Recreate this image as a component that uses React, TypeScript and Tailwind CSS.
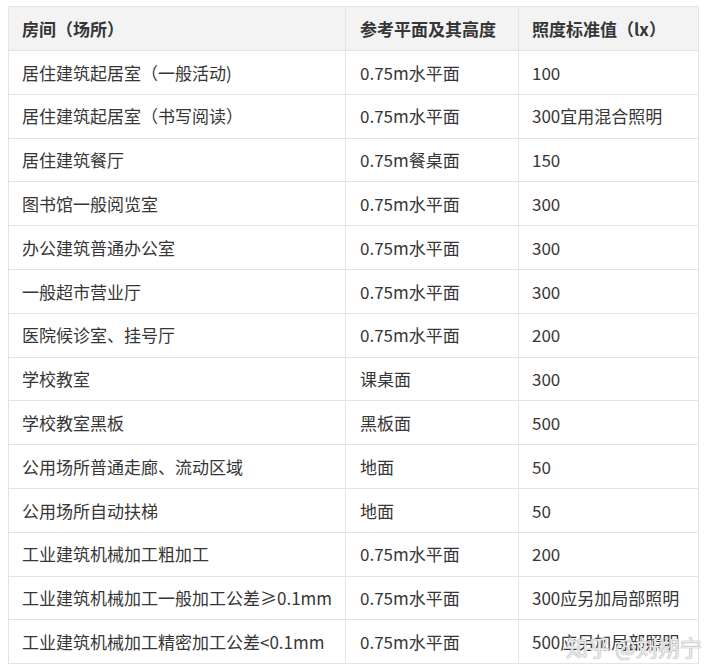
import React from "react";

const rows: [string, string, string][] = [
  ["居住建筑起居室（一般活动)", "0.75m水平面", "100"],
  ["居住建筑起居室（书写阅读）", "0.75m水平面", "300宜用混合照明"],
  ["居住建筑餐厅", "0.75m餐桌面", "150"],
  ["图书馆一般阅览室", "0.75m水平面", "300"],
  ["办公建筑普通办公室", "0.75m水平面", "300"],
  ["一般超市营业厅", "0.75m水平面", "300"],
  ["医院候诊室、挂号厅", "0.75m水平面", "200"],
  ["学校教室", "课桌面", "300"],
  ["学校教室黑板", "黑板面", "500"],
  ["公用场所普通走廊、流动区域", "地面", "50"],
  ["公用场所自动扶梯", "地面", "50"],
  ["工业建筑机械加工粗加工", "0.75m水平面", "200"],
  ["工业建筑机械加工一般加工公差≥0.1mm", "0.75m水平面", "300应另加局部照明"],
  ["工业建筑机械加工精密加工公差<0.1mm", "0.75m水平面", "500应另加局部照明"],
];

export default function App() {
  return (
    <div
      className="relative w-[708px] h-[672px] bg-white pt-[6px] pl-[8px]"
      style={{ fontFamily: '"Noto Sans CJK SC", "Noto Sans", sans-serif' }}
    >
      <table className="w-[690px] table-fixed border-collapse text-[17px] text-[#363636]">
        <colgroup>
          <col className="w-[337px]" />
          <col className="w-[173px]" />
          <col className="w-[180px]" />
        </colgroup>
        <thead>
          <tr className="h-[44px] bg-[#f3f3f3]">
            <th className="border border-[#e3e3e3] pl-[13px] text-left font-bold">房间（场所）</th>
            <th className="border border-[#e3e3e3] pl-[14px] text-left font-bold">参考平面及其高度</th>
            <th className="border border-[#e3e3e3] pl-[13px] text-left font-bold">照度标准值（lx）</th>
          </tr>
        </thead>
        <tbody>
          {rows.map((r, i) => (
            <tr key={i} className="h-[43.8px]">
              <td className="border border-[#e3e3e3] pl-[13px] whitespace-nowrap">{r[0]}</td>
              <td className="border border-[#e3e3e3] pl-[14px] whitespace-nowrap">{r[1]}</td>
              <td className="border border-[#e3e3e3] pl-[13px] whitespace-nowrap">{r[2]}</td>
            </tr>
          ))}
        </tbody>
      </table>
      <div
        className="absolute left-[566px] top-[630px] text-[22px] text-white/80 whitespace-nowrap"
        style={{ textShadow: "0 0 1px #999, 0 0 1px #999" }}
      >
        知乎 @刘朔宁
      </div>
    </div>
  );
}
